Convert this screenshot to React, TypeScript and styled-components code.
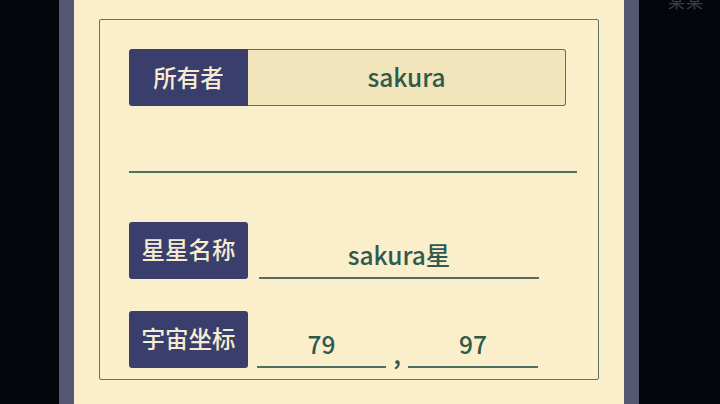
import styled, { createGlobalStyle } from 'styled-components';

const GlobalStyle = createGlobalStyle`
  html, body {
    margin: 0;
    padding: 0;
    background-color: #03060c;
    overflow: hidden;
  }
  body {
    font-family: "Noto Sans CJK SC", "Noto Sans", sans-serif;
  }
`;

const Page = styled.div`
  position: relative;
  width: 720px;
  height: 404px;
  padding-left: 59px;
  box-sizing: border-box;
  display: flex;
  align-items: stretch;
`;

const CornerHint = styled.span`
  position: absolute;
  top: -12px;
  left: 668px;
  font-size: 17px;
  color: #3d3f45;
  letter-spacing: 1px;
`;

const Frame = styled.div`
  width: 580px;
  box-sizing: border-box;
  background-color: #faeecb;
  border-left: 15px solid #565772;
  border-right: 15px solid #565772;
  padding: 19px 25px 0;
`;

const Panel = styled.div`
  width: 500px;
  height: 361px;
  box-sizing: border-box;
  border: 1px solid #567563;
  border-radius: 2px;
  padding: 29px 29px 0;
  display: flex;
  flex-direction: column;
`;

const Row = styled.div<{ $top?: number }>`
  display: flex;
  align-items: stretch;
  height: 57px;
  margin-top: ${(p) => p.$top ?? 0}px;
`;

const Label = styled.div<{ $joined?: boolean }>`
  flex: none;
  width: 119px;
  display: flex;
  align-items: center;
  justify-content: center;
  background-color: #3a3e6c;
  color: #f6ecd2;
  font-size: 23.5px;
  font-weight: 500;
  padding-bottom: 2px;
  box-sizing: border-box;
  border-radius: ${(p) => (p.$joined ? '3px 0 0 3px' : '3px')};
`;

const BoxInput = styled.input`
  width: 318px;
  box-sizing: border-box;
  margin: 0;
  padding: 0 0 3px;
  background-color: #f2e4bb;
  border: 1px solid #567563;
  border-left: none;
  border-radius: 0 3px 3px 0;
  color: #2f5a4f;
  font-family: "Noto Sans CJK SC", sans-serif;
  font-size: 24.5px;
  font-weight: 500;
  text-align: center;
  outline: none;
`;

const Divider = styled.div`
  width: 448px;
  height: 1.5px;
  margin-top: 65px;
  background-color: #4f7060;
`;

const LineInput = styled.input<{ $width: number; $gap: number }>`
  width: ${(p) => p.$width}px;
  height: 45px;
  align-self: flex-end;
  box-sizing: border-box;
  margin: 0 0 0 ${(p) => p.$gap}px;
  padding: 0 0 2px;
  background: transparent;
  border: none;
  border-bottom: 2px solid #4f7060;
  color: #2f5a4f;
  font-family: "Noto Sans CJK SC", sans-serif;
  font-size: 24.5px;
  font-weight: 500;
  text-align: center;
  outline: none;
`;

const Comma = styled.span`
  align-self: flex-end;
  width: 22px;
  text-align: center;
  color: #2f5a4f;
  font-size: 26px;
  font-weight: 500;
  line-height: 1;
  padding-bottom: 2px;
`;

export default function App() {
  return (
    <>
      <GlobalStyle />
      <Page>
        <CornerHint>某某</CornerHint>
        <Frame>
          <Panel>
            <Row>
              <Label $joined>所有者</Label>
              <BoxInput readOnly value="sakura" />
            </Row>
            <Divider />
            <Row $top={49}>
              <Label>星星名称</Label>
              <LineInput readOnly value="sakura星" $width={280} $gap={11} />
            </Row>
            <Row $top={32}>
              <Label>宇宙坐标</Label>
              <LineInput readOnly value="79" $width={129} $gap={9} />
              <Comma>,</Comma>
              <LineInput readOnly value="97" $width={130} $gap={0} />
            </Row>
          </Panel>
        </Frame>
      </Page>
    </>
  );
}
